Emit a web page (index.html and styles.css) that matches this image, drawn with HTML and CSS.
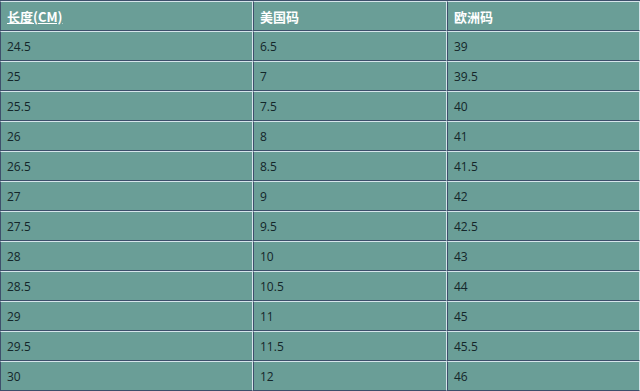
FILE: index.html
```html
<!DOCTYPE html>
<html lang="zh">
<head>
<meta charset="utf-8">
<link rel="stylesheet" href="styles.css">
</head>
<body>
<table class="size-table">
  <colgroup>
    <col class="c1"><col class="c2"><col class="c3">
  </colgroup>
  <thead>
    <tr><th><a class="head-link" href="#">长度(CM)</a></th><th>美国码</th><th>欧洲码</th></tr>
  </thead>
  <tbody>
    <tr><td>24.5</td><td>6.5</td><td>39</td></tr>
    <tr><td>25</td><td>7</td><td>39.5</td></tr>
    <tr><td>25.5</td><td>7.5</td><td>40</td></tr>
    <tr><td>26</td><td>8</td><td>41</td></tr>
    <tr><td>26.5</td><td>8.5</td><td>41.5</td></tr>
    <tr><td>27</td><td>9</td><td>42</td></tr>
    <tr><td>27.5</td><td>9.5</td><td>42.5</td></tr>
    <tr><td>28</td><td>10</td><td>43</td></tr>
    <tr><td>28.5</td><td>10.5</td><td>44</td></tr>
    <tr><td>29</td><td>11</td><td>45</td></tr>
    <tr><td>29.5</td><td>11.5</td><td>45.5</td></tr>
    <tr><td>30</td><td>12</td><td>46</td></tr>
  </tbody>
</table>
</body>
</html>
```
FILE: styles.css
```css
html, body {
  margin: 0;
  padding: 0;
  background: #ffffff;
}
.size-table {
  width: 640px;
  table-layout: fixed;
  border-collapse: separate;
  border-spacing: 0;
  border-top: 1px solid #3e4f6b;
  font-family: "Open Sans", "Noto Sans CJK SC", sans-serif;
  font-size: 12px;
}
.c1 { width: 253px; }
.c2 { width: 194px; }
.c3 { width: 193px; }
.size-table th,
.size-table td {
  height: 28px;
  padding: 0 0 0 6px;
  background: #6a9e97;
  border-top: 1px solid #d6e4ea;
  border-bottom: 1px solid #3e4f6b;
  border-left: 1px solid #3e4f6b;
  border-right: 1px solid #d6e4ea;
  text-align: left;
  vertical-align: middle;
  color: #14262a;
}
.size-table th {
  color: #ffffff;
  font-weight: bold;
  font-size: 13px;
  font-family: "Noto Sans CJK SC", "Open Sans", sans-serif;
}
.head-link {
  color: #ffffff;
  text-decoration: underline;
}
```
